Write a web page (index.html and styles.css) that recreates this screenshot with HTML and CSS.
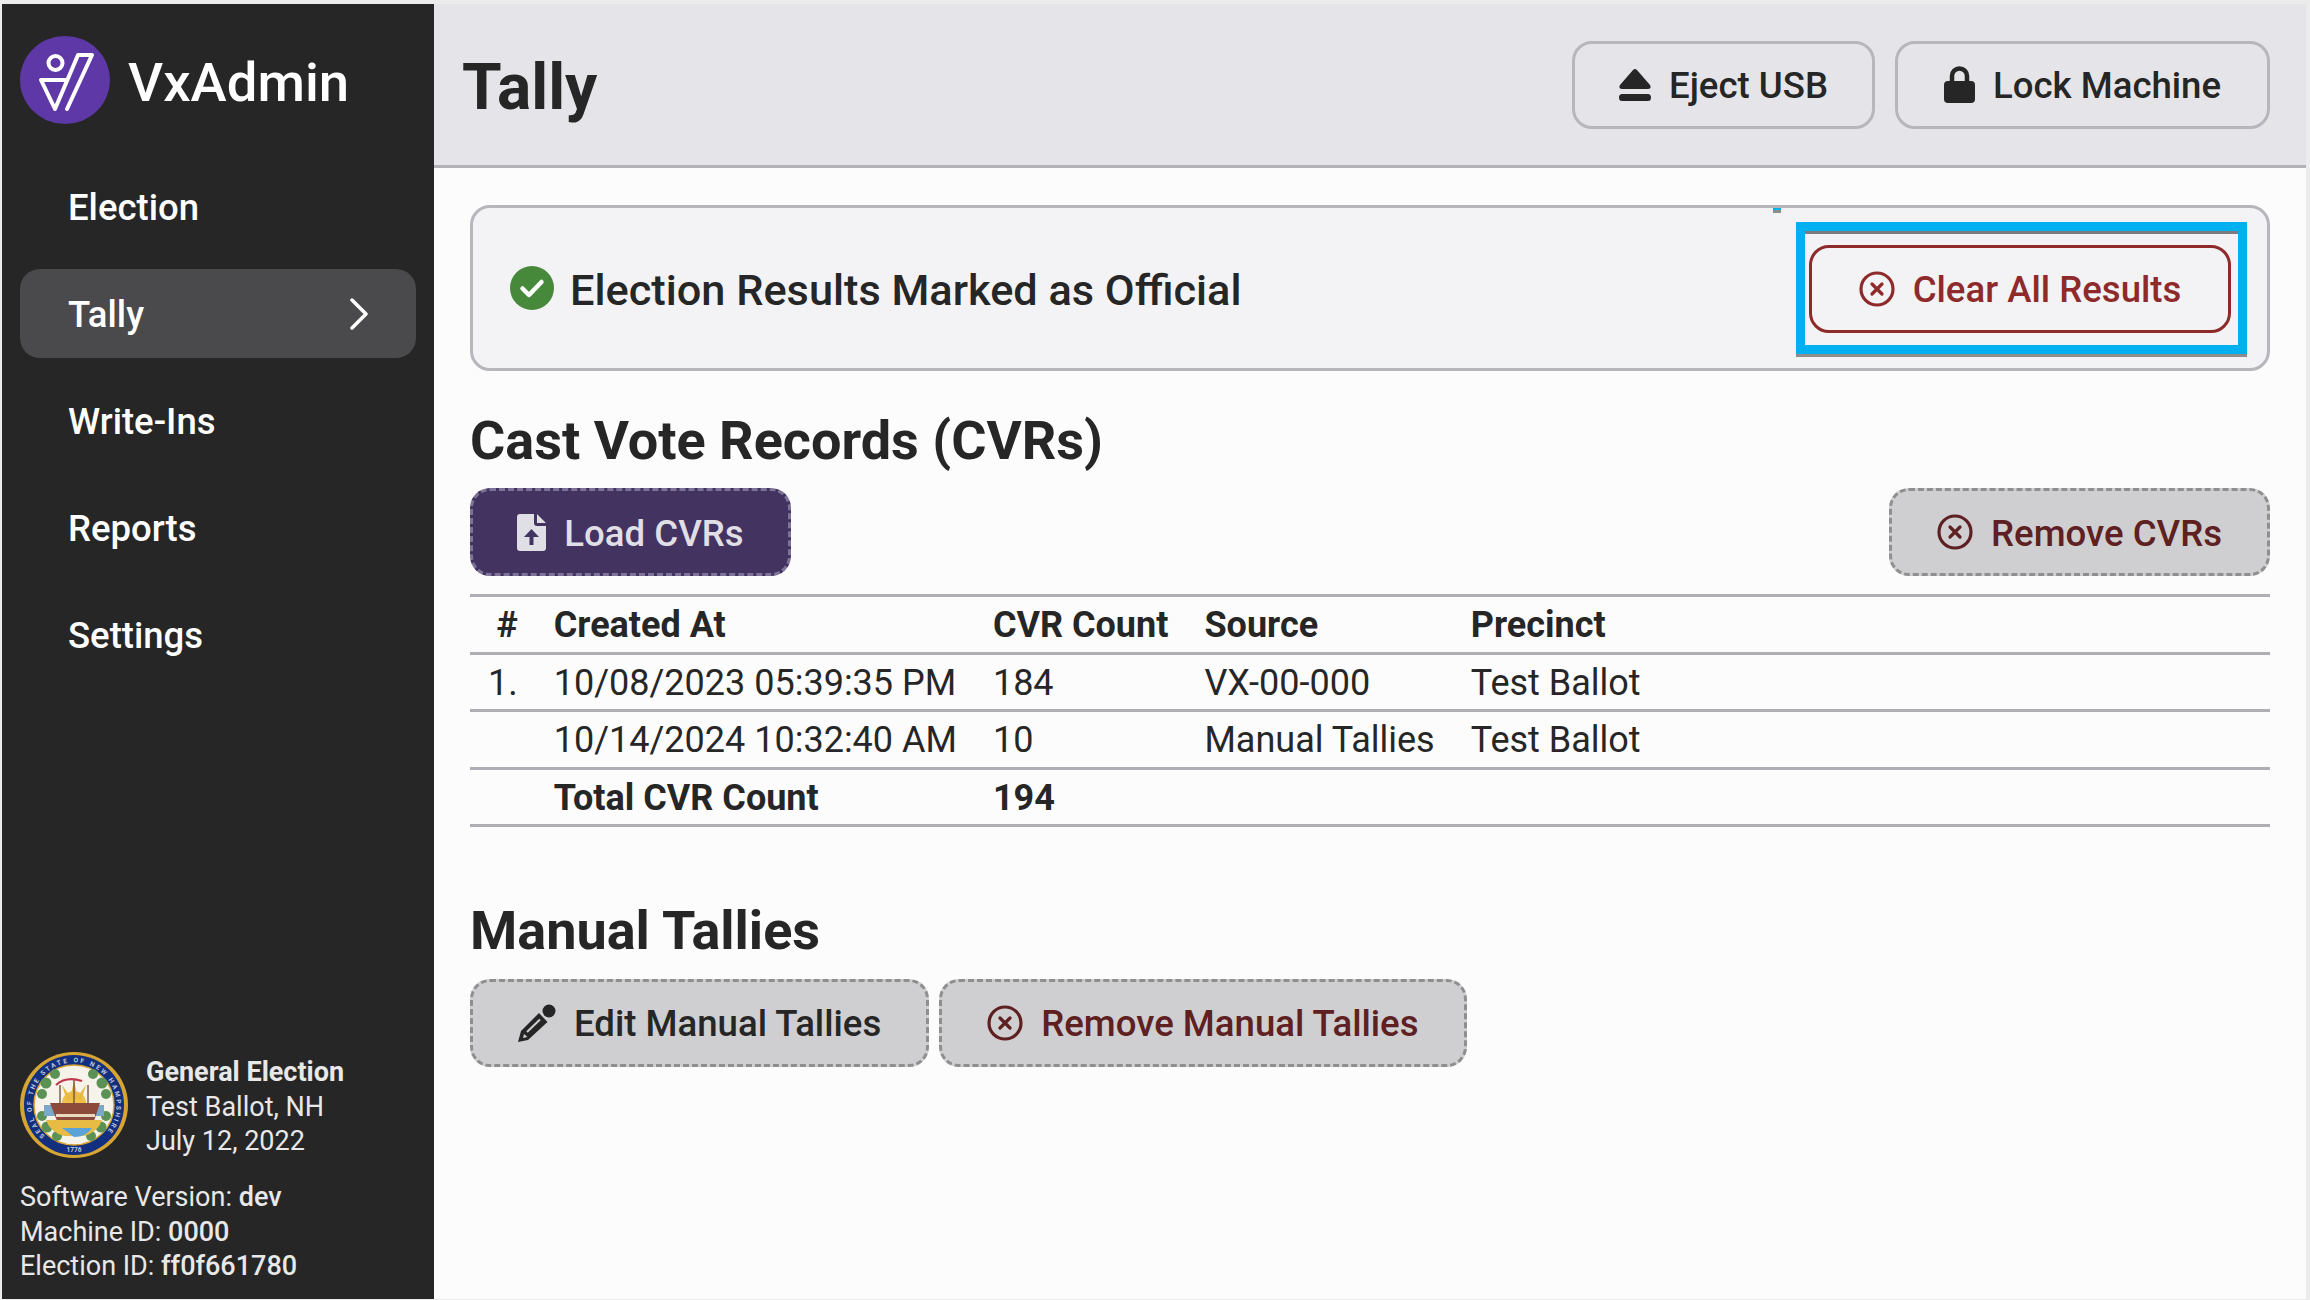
FILE: index.html
```html
<!DOCTYPE html>
<html lang="en">
<head>
    <meta charset="UTF-8">
    <meta name="viewport" content="width=device-width, initial-scale=1.0">
    <title>VxAdmin - Tally</title>
    <link rel="stylesheet" href="styles.css">
</head>
<body>
    <div class="app">
        <aside class="sidebar">
            <div class="brand">
                <svg class="brand-logo" viewBox="0 0 90 88">
                    <ellipse cx="45" cy="44" rx="45" ry="44" fill="#5f38a8"/>
                    <circle cx="35.500" cy="27" r="7" fill="none" stroke="#fff" stroke-width="4"/>
                    <path d="M21 44 H47 M21 44 L35 73 L58 19 H72 L47 73" fill="none" stroke="#fff" stroke-width="4" stroke-linejoin="round" stroke-linecap="round"/>
                </svg>
                <span class="brand-name">VxAdmin</span>
            </div>
            <nav class="nav">
                <a class="nav-item">Election</a>
                <a class="nav-item nav-item-active">Tally
                    <svg class="nav-chevron" viewBox="0 0 18 32"><path d="M2 2 L16 16 L2 30" fill="none" stroke="#fff" stroke-width="3.500" stroke-linecap="round" stroke-linejoin="round"/></svg>
                </a>
                <a class="nav-item">Write-Ins</a>
                <a class="nav-item">Reports</a>
                <a class="nav-item">Settings</a>
            </nav>
            <div class="sidebar-footer">
                <div class="election-info">
                    <svg class="seal" viewBox="0 0 108 106">
                        <ellipse cx="54" cy="53" rx="54" ry="53" fill="#d7a531"/>
                        <circle cx="54" cy="53" r="50" fill="#12307f"/>
                        <circle cx="54" cy="53" r="40" fill="#f5f3ea" stroke="#d7a531" stroke-width="1.500"/>
                        <defs><path id="sealRing" d="M25 84 A42.500 42.500 0 1 1 83 84"/></defs>
                        <text class="seal-text"><textPath href="#sealRing" textLength="196">SEAL OF THE STATE OF NEW HAMPSHIRE</textPath></text>
                        <text class="seal-text" x="54" y="100" text-anchor="middle">1776</text>
                        <g fill="#5c9156">
                            <circle cx="22" cy="42" r="5"/><circle cx="26" cy="31" r="5.500"/><circle cx="35" cy="22" r="5"/>
                            <circle cx="86" cy="42" r="5"/><circle cx="82" cy="31" r="5.500"/><circle cx="73" cy="22" r="5"/>
                            <circle cx="22" cy="64" r="5"/><circle cx="27" cy="75" r="5.500"/><circle cx="37" cy="84" r="5"/>
                            <circle cx="86" cy="64" r="5"/><circle cx="81" cy="75" r="5.500"/><circle cx="71" cy="84" r="5"/>
                        </g>
                        <path d="M42 51 A12 12 0 0 1 66 51 Z" fill="#f0c14a"/>
                        <path d="M54 29 L58 47 L50 47 Z M42 33 L52 47 L47 49 Z M66 33 L56 47 L61 49 Z" fill="#e9b93f"/>
                        <path d="M24 53 H84 V64 H24 Z" fill="#7ba7c9"/>
                        <path d="M30 51 H80 L74 69 H37 Z" fill="#8c4a3a"/>
                        <path d="M36 62 H75 V65 H36 Z" fill="#ead9c0"/>
                        <path d="M40 33 V52 M54 28 V52 M68 33 V52" stroke="#6d4a36" stroke-width="1.300"/>
                        <path d="M36 33 Q46 24 62 29" fill="none" stroke="#c0394a" stroke-width="2.200"/>
                        <path d="M26 68 H82 Q78 80 64 84 H44 Q30 80 26 68 Z" fill="#e8bb45"/>
                        <path d="M42 76 H72 Q66 85 54 85 Z" fill="#5aa3d8"/>
                    </svg>
                    <div class="election-text">
                        <div class="election-title">General Election</div>
                        <div>Test Ballot, NH</div>
                        <div>July 12, 2022</div>
                    </div>
                </div>
                <div class="machine-info">
                    <div>Software Version: <b>dev</b></div>
                    <div>Machine ID: <b>0000</b></div>
                    <div>Election ID: <b>ff0f661780</b></div>
                </div>
            </div>
        </aside>

        <div class="main">
            <header class="header">
                <h1>Tally</h1>
                <div class="header-actions">
                    <button class="btn btn-header btn-eject">
                        <svg class="icon icon-eject" viewBox="0 0 32 32"><path d="M14 1 Q16 -1 18 1 L31 16 Q33 20 29 20 H3 Q-1 20 1 16 Z M3 25 H29 Q32 25 32 28.500 Q32 32 29 32 H3 Q0 32 0 28.500 Q0 25 3 25 Z" fill="#262626"/></svg>
                        <span>Eject USB</span>
                    </button>
                    <button class="btn btn-header btn-lock">
                        <svg class="icon icon-lock" viewBox="0 0 31 37"><path d="M8 16 V10 A7.500 7.500 0 0 1 23 10 V16" fill="none" stroke="#262626" stroke-width="4.500"/><rect x="0" y="15" width="31" height="22" rx="4" fill="#262626"/></svg>
                        <span>Lock Machine</span>
                    </button>
                </div>
            </header>

            <main class="content">
                <div class="banner">
                    <div class="banner-status">
                        <svg class="icon-check" viewBox="0 0 44 44"><circle cx="22" cy="22" r="22" fill="#46893a"/><path d="M12.500 22.500 L19 29 L31.500 16" fill="none" stroke="#fff" stroke-width="4.500" stroke-linecap="round" stroke-linejoin="round"/></svg>
                        <span class="banner-text">Election Results Marked as Official</span>
                    </div>
                    <span class="focus-tick"></span>
                    <div class="focus-box">
                        <button class="btn btn-danger">
                            <svg class="icon icon-x" viewBox="0 0 36 36"><use href="#circleX"/></svg>
                            <span>Clear All Results</span>
                        </button>
                    </div>
                </div>

                <h2>Cast Vote Records (CVRs)</h2>
                <div class="actions actions-split">
                    <button class="btn btn-primary">
                        <svg class="icon icon-file" viewBox="0 0 29 37"><path d="M3 0 H17 V9 Q17 12 20 12 H29 V34 Q29 37 26 37 H3 Q0 37 0 34 V3 Q0 0 3 0 Z M20 0 L29 9 H20 Z M14.500 15 L7 23 H12.500 V31 H16.500 V23 H22 Z" fill="#e0dfe6" fill-rule="evenodd"/></svg>
                        <span>Load CVRs</span>
                    </button>
                    <button class="btn btn-disabled btn-disabled-danger">
                        <svg class="icon icon-x" viewBox="0 0 36 36"><use href="#circleX"/></svg>
                        <span>Remove CVRs</span>
                    </button>
                </div>

                <table class="cvr-table">
                    <thead>
                        <tr><th class="col-num">#</th><th>Created At</th><th>CVR Count</th><th>Source</th><th class="col-last">Precinct</th></tr>
                    </thead>
                    <tbody>
                        <tr><td class="col-num">1.</td><td>10/08/2023 05:39:35 PM</td><td>184</td><td>VX-00-000</td><td>Test Ballot</td></tr>
                        <tr><td></td><td>10/14/2024 10:32:40 AM</td><td>10</td><td>Manual Tallies</td><td>Test Ballot</td></tr>
                        <tr class="total-row"><td></td><td>Total CVR Count</td><td>194</td><td></td><td></td></tr>
                    </tbody>
                </table>

                <h2 class="section-manual">Manual Tallies</h2>
                <div class="actions">
                    <button class="btn btn-disabled">
                        <svg class="icon icon-pencil" viewBox="0 0 38 38">
                            <circle cx="31" cy="7" r="6.500" fill="#262626"/>
                            <path d="M21 9 L29.500 18 L10 36 L0 38 L3 27 Z" fill="#262626"/>
                            <path d="M9 28 L22 15.500" stroke="#cfcfd2" stroke-width="2"/>
                            <path d="M6 30 L9.500 33 L5 34 Z" fill="#cfcfd2"/>
                        </svg>
                        <span>Edit Manual Tallies</span>
                    </button>
                    <button class="btn btn-disabled btn-disabled-danger">
                        <svg class="icon icon-x" viewBox="0 0 36 36"><use href="#circleX"/></svg>
                        <span>Remove Manual Tallies</span>
                    </button>
                </div>
            </main>
        </div>
    </div>

    <svg class="svg-defs" width="0" height="0">
        <symbol id="circleX" viewBox="0 0 36 36">
            <circle cx="18" cy="18" r="16" fill="none" stroke="currentColor" stroke-width="3.200"/>
            <path d="M13 13 L23 23 M23 13 L13 23" fill="none" stroke="currentColor" stroke-width="3.200" stroke-linecap="round"/>
        </symbol>
    </svg>
</body>
</html>
```

FILE: styles.css
```css
* {
    box-sizing: border-box;
}
html, body {
    height: 100%;
}
body {
    margin: 0;
    padding: 4px 4px 1px 2px;
    background-color: #ececec;
    font-family: Roboto, "Liberation Sans", sans-serif;
    color: #262626;
}
.app {
    display: flex;
    height: 100%;
}
.svg-defs {
    display: block;
}

/* sidebar */
.sidebar {
    width: 432px;
    flex-shrink: 0;
    display: flex;
    flex-direction: column;
    background-color: #262626;
    color: #fff;
    padding: 32px 18px 15.500px;
}
.brand {
    display: flex;
    align-items: center;
    gap: 18px;
    height: 88px;
}
.brand-logo {
    width: 90px;
    height: 88px;
}
.brand-name {
    font-size: 54.500px;
    font-weight: 500;
    padding-top: 4px;
}
.nav {
    display: flex;
    flex-direction: column;
    gap: 18px;
    margin-top: 38px;
}
.nav-item {
    display: flex;
    align-items: center;
    justify-content: space-between;
    height: 89px;
    padding: 1px 48px 0;
    border-radius: 20px;
    font-size: 36.500px;
    font-weight: 500;
}
.nav-item-active {
    background-color: #4a4a4c;
}
.nav-chevron {
    width: 18px;
    height: 32px;
}
.sidebar-footer {
    margin-top: auto;
    font-size: 27px;
    color: #e8e8e8;
}
.election-info {
    display: flex;
    align-items: center;
    gap: 18px;
    margin-bottom: 20px;
}
.seal {
    width: 108px;
    height: 106px;
    flex-shrink: 0;
    margin-bottom: 2px;
}
.seal-text {
    font-size: 6.500px;
    font-weight: 700;
    fill: #c4c9de;
}
.election-text, .machine-info {
    line-height: 34.500px;
}
.election-text {
    padding-top: 2px;
}
.election-title {
    font-weight: 700;
}
.machine-info b {
    font-weight: 500;
}

/* header */
.main {
    flex: 1;
    display: flex;
    flex-direction: column;
    background-color: #fcfcfc;
}
.header {
    display: flex;
    align-items: center;
    justify-content: space-between;
    height: 164px;
    padding: 0 36px 0 28px;
    background-color: #e5e5e9;
    border-bottom: 3px solid #b4b2b9;
}
h1 {
    margin: 6px 0 0;
    font-size: 64px;
    font-weight: 700;
}
.header-actions {
    display: flex;
    gap: 20px;
}

/* buttons */
.btn {
    display: inline-flex;
    align-items: center;
    justify-content: center;
    gap: 18px;
    height: 88px;
    padding: 2px 45px 0;
    border-radius: 20px;
    font-family: inherit;
    font-size: 36.600px;
    font-weight: 500;
    color: #262626;
    background: none;
}
.btn-header {
    background-color: #e5e5e9;
    border: 3px solid #b8b6bd;
    padding: 2px 0 0;
}
.btn-eject {
    width: 303px;
}
.btn-lock {
    width: 375px;
}
.btn-danger {
    color: #8e2a2a;
    border: 3px solid #8e2a2a;
    background-color: #f3f3f6;
    width: 422px;
    padding: 0;
}
.btn-danger .icon {
    margin-top: 0;
}
.btn-primary {
    color: #e0dfe6;
    background-color: #433360;
    border: 3px dashed #7d7396;
    width: 321px;
    padding: 2px 0 0;
}
.btn-disabled {
    background-color: #cfcfd2;
    border: 3px dashed #8f8f8f;
}
.btn-disabled-danger {
    color: #5e2020;
}
.icon {
    flex-shrink: 0;
    margin-top: -2px;
}
.icon-eject {
    width: 32px;
    height: 32px;
}
.icon-lock {
    width: 31px;
    height: 37px;
}
.icon-x {
    width: 36px;
    height: 36px;
}
.icon-file {
    width: 29px;
    height: 37px;
}
.icon-pencil {
    width: 38px;
    height: 38px;
}

/* content */
.content {
    padding: 37px 36px 0;
}
.banner {
    position: relative;
    display: flex;
    align-items: center;
    justify-content: space-between;
    height: 166px;
    padding: 0 20px 0 37px;
    background-color: #f3f3f6;
    border: 3px solid #b8b6bd;
    border-radius: 20px;
}
.banner-status {
    display: flex;
    align-items: center;
    gap: 16px;
    font-size: 43.300px;
    font-weight: 500;
}
.banner-text {
    padding-top: 5px;
}
.icon-check {
    width: 44px;
    height: 44px;
}
.focus-box {
    padding: 14px 7px 12px 4px;
    border: 9px solid #00b0f0;
    box-shadow: 0 3px 0 #8d8d8d, inset 0 3px 0 #7c7c7c;
}
.focus-tick {
    position: absolute;
    top: 0;
    left: 1300px;
    width: 8px;
    height: 5px;
    background-color: #8d8d8d;
    border-top: 2px solid #00b0f0;
}
h2 {
    margin: 39.500px 0 17.500px;
    font-size: 54px;
    line-height: 60px;
    font-weight: 700;
}
.section-manual {
    margin-top: 74px;
}
.actions {
    display: flex;
    gap: 10px;
}
.actions-split {
    justify-content: space-between;
}
.cvr-table {
    width: 100%;
    margin-top: 18px;
    border-collapse: collapse;
    font-size: 36px;
}
.cvr-table th, .cvr-table td {
    height: 57.500px;
    padding: 2px 18px 0;
    text-align: left;
    white-space: nowrap;
    border-top: 3px solid #b0aeb5;
    border-bottom: 3px solid #b0aeb5;
}
.cvr-table th {
    font-weight: 700;
}
.cvr-table .col-num {
    text-align: right;
}
.cvr-table .col-last {
    width: 100%;
}
.total-row td {
    font-weight: 700;
}
```
